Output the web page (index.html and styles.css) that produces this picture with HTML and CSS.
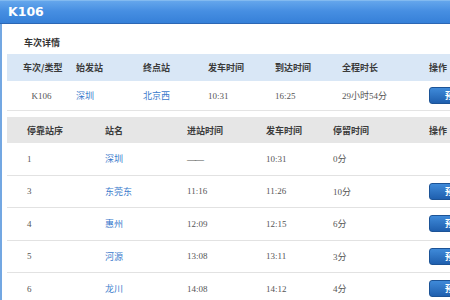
FILE: index.html
```html
<!DOCTYPE html>
<html lang="zh">
<head>
<meta charset="utf-8">
<title>K106</title>
<link rel="stylesheet" href="styles.css">
</head>
<body>
<div class="frame">
  <div class="titlebar"><h1 class="title">K106</h1></div>
  <div class="panel">
    <div class="section-title">车次详情</div>
    <table class="grid info">
      <colgroup>
        <col class="c-a"><col class="c-b"><col class="c-c"><col class="c-d"><col class="c-e"><col class="c-f"><col class="c-g">
      </colgroup>
      <thead>
        <tr><th class="first">车次/类型</th><th>始发站</th><th>终点站</th><th>发车时间</th><th>到达时间</th><th>全程时长</th><th>操作</th></tr>
      </thead>
      <tbody>
        <tr><td class="first">K106</td><td><a class="link">深圳</a></td><td><a class="link">北京西</a></td><td>10:31</td><td>16:25</td><td>29小时54分</td><td><span class="btn">预订</span></td></tr>
      </tbody>
    </table>
    <table class="grid stops">
      <colgroup>
        <col class="s-a"><col class="s-b"><col class="s-c"><col class="s-d"><col class="s-e"><col class="s-f">
      </colgroup>
      <thead>
        <tr><th class="first">停靠站序</th><th>站名</th><th>进站时间</th><th>发车时间</th><th>停留时间</th><th>操作</th></tr>
      </thead>
      <tbody>
        <tr><td class="first">1</td><td><a class="link">深圳</a></td><td class="dash">——</td><td>10:31</td><td>0分</td><td></td></tr>
        <tr><td class="first">3</td><td><a class="link">东莞东</a></td><td>11:16</td><td>11:26</td><td>10分</td><td><span class="btn">预订</span></td></tr>
        <tr><td class="first">4</td><td><a class="link">惠州</a></td><td>12:09</td><td>12:15</td><td>6分</td><td><span class="btn">预订</span></td></tr>
        <tr><td class="first">5</td><td><a class="link">河源</a></td><td>13:08</td><td>13:11</td><td>3分</td><td><span class="btn">预订</span></td></tr>
        <tr><td class="first">6</td><td><a class="link">龙川</a></td><td>14:08</td><td>14:12</td><td>4分</td><td><span class="btn">预订</span></td></tr>
      </tbody>
    </table>
  </div>
</div>
</body>
</html>
```
FILE: styles.css
```css
html, body {
  margin: 0;
  padding: 0;
  overflow: hidden;
}
body {
  width: 450px;
  height: 300px;
  background: #ffffff;
  font-family: "Noto Sans CJK SC", sans-serif;
}
.frame {
  width: 540px;
}
.titlebar {
  box-sizing: border-box;
  height: 24px;
  background: linear-gradient(#64a6ec 0%, #478fe2 45%, #3680d8 100%);
  border-top: 1px solid #82baf0;
  border-bottom: 1px solid #2c67b4;
}
.title {
  margin: 0;
  padding-left: 8px;
  font-family: "DejaVu Sans", sans-serif;
  font-weight: bold;
  font-size: 12.5px;
  line-height: 21px;
  color: #ffffff;
}
.panel {
  border-left: 2px solid #73a7e2;
  padding-left: 5px;
  padding-bottom: 20px;
}
.section-title {
  padding: 13px 0 5px 17px;
  line-height: 12px;
  font-size: 9px;
  font-weight: bold;
  color: #333333;
}
.grid {
  border-collapse: separate;
  border-spacing: 0;
  table-layout: fixed;
  width: 533px;
}
.grid th {
  padding: 0 0 0 16px;
  text-align: left;
  font-size: 9px;
  font-weight: bold;
  color: #3a3a3a;
  white-space: nowrap;
}
.grid td {
  padding: 0 0 0 16px;
  text-align: left;
  font-family: "Liberation Serif", "Noto Sans CJK SC", serif;
  font-size: 9px;
  color: #555555;
  white-space: nowrap;
}
.info th {
  height: 27px;
  background: #d9e7f6;
}
.info td {
  height: 29px;
  border-bottom: 1px solid #e4e4e4;
}
.info .first {
  text-align: center;
  padding-right: 0;
}
.c-a { width: 53px; }
.c-b { width: 67px; }
.c-c { width: 65px; }
.c-d { width: 67px; }
.c-e { width: 67px; }
.c-f { width: 87px; }
.c-g { width: 127px; }

.stops {
  margin-top: 6px;
}
.stops th {
  height: 26px;
  background: #e6e6e6;
}
.stops td {
  height: 31.5px;
  border-bottom: 1px solid #e2e2e2;
}
.stops .first {
  padding-left: 20px;
}
.s-a { width: 82px; }
.s-b { width: 82px; }
.s-c { width: 79px; }
.s-d { width: 67px; }
.s-e { width: 96px; }
.s-f { width: 127px; }

.link {
  color: #3b7bcc;
  font-family: "Noto Sans CJK SC", sans-serif;
  text-decoration: none;
}
.dash {
  letter-spacing: -1px;
  color: #444444;
}
.btn {
  display: inline-block;
  box-sizing: border-box;
  width: 56px;
  height: 17px;
  padding-left: 15px;
  vertical-align: middle;
  border: 1px solid #1c5396;
  border-radius: 3px;
  background: linear-gradient(#3f8ad9, #1f5fae);
  color: #ffffff;
  font-family: "Noto Sans CJK SC", sans-serif;
  font-size: 9px;
  font-weight: bold;
  line-height: 15px;
}
```
